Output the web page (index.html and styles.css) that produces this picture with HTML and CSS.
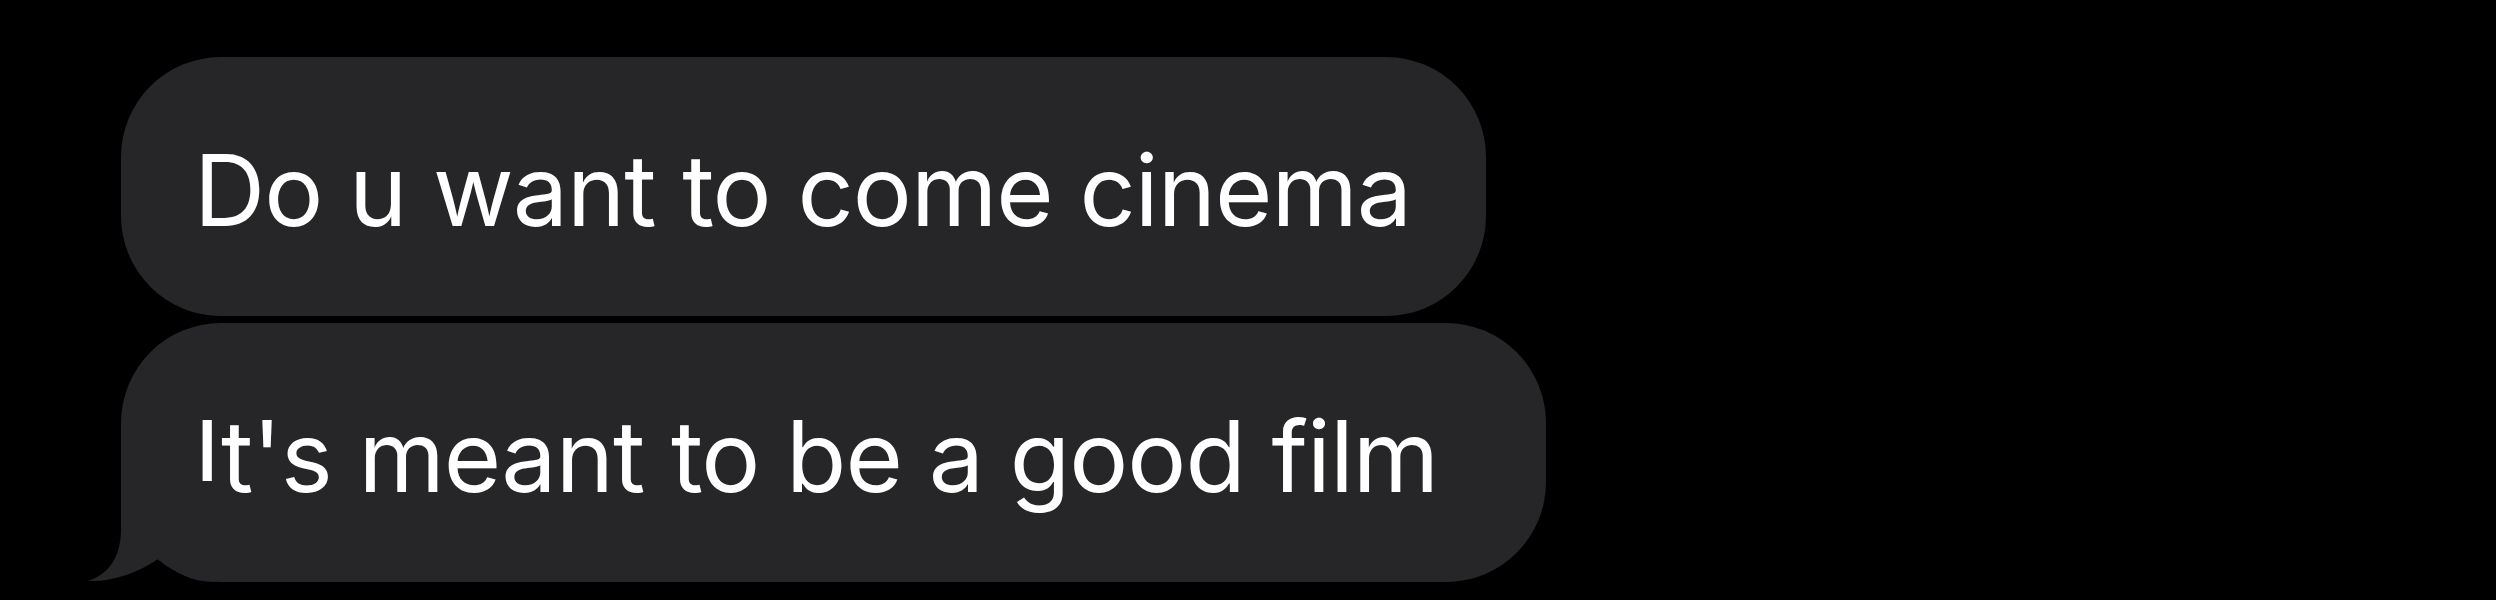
FILE: index.html
```html
<!DOCTYPE html>
<html>
<head>
<meta charset="utf-8">
<link rel="stylesheet" href="styles.css">
</head>
<body>
<div class="thread">
  <div class="bubble">Do u want to come cinema</div>
  <div class="bubble last">It's meant to be a good film
    <svg class="tail" width="140" height="102" viewBox="0 0 140 102"><path d="M41 0 L41 48 C41 78 27 94 8 100 C32 101 58 92 78 78 C96 92 112 101 135 101 L135 0 Z" fill="#262628"/></svg>
  </div>
</div>
</body>
</html>
```
FILE: styles.css
```css
html, body { margin: 0; background: #000; }
body { width: 2496px; height: 600px; overflow: hidden; }
.thread {
  display: flex;
  flex-direction: column;
  align-items: flex-start;
  gap: 7px;
  padding: 57px 0 0 121px;
}
.bubble {
  position: relative;
  height: 259px;
  box-sizing: border-box;
  display: flex;
  align-items: center;
  padding: 6px 75px 0 73px;
  background: #262628;
  border-radius: 100px;
  color: #fff;
  font-family: "Inter", "Liberation Sans", Arial, sans-serif;
  font-size: 98.6px;
  letter-spacing: -1px;
  white-space: nowrap;
}
.bubble.last {
  padding-right: 108px;
}
.tail {
  position: absolute;
  left: -41px;
  bottom: -1px;
}
```
